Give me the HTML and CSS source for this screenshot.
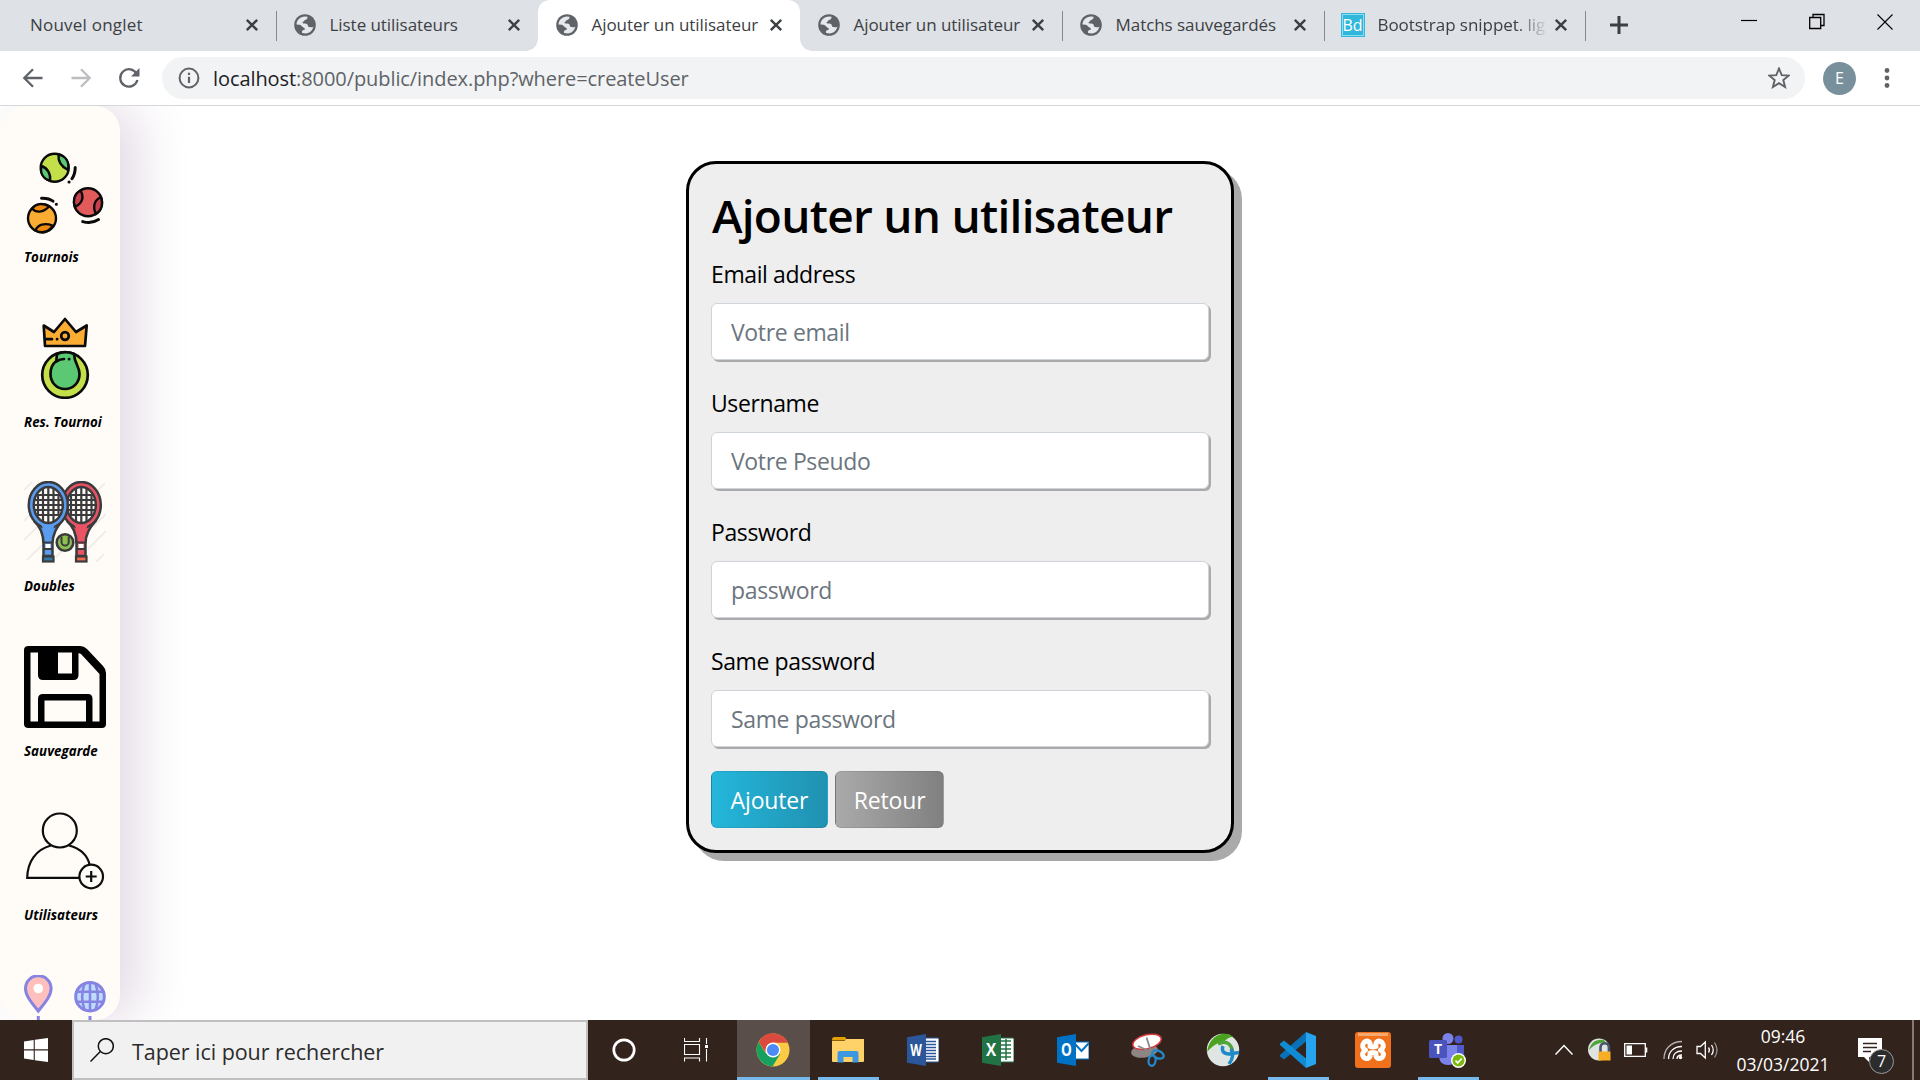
FILE: index.html
```html
<!DOCTYPE html>
<html lang="fr">
<head>
<meta charset="utf-8">
<title>Ajouter un utilisateur</title>
<link rel="stylesheet" href="styles.css">
</head>
<body>
<svg class="defs" width="0" height="0">
  <defs>
    <symbol id="globe" viewBox="0 0 22 22"><circle cx="11" cy="11" r="10.800" fill="#5f6368"/><path d="M2.500 10.500C2.600 6 6 2.700 11 2.500l2.500.3c.3 1.700-.7 2.900-2.300 3.100-1.500.2-1.200 1.900-2.500 2.100-.5 1.200.6 1.700 1.900 1.600 2.200-.2 3.400.8 3.300 2.500.1 1.100 1.600 1 3 1.200 1 .2 1.700 0 2.500-.8-.6 3.700-3.700 6.700-7.600 7l-3.700-.4c-.5-1.900.2-2.900 1.600-3.100 1.700-.3 1.500-2-.3-2.600-1.600-.5-1.900-2.400-3.600-2.700z" fill="#e6e8eb"/></symbol>
    <symbol id="cross" viewBox="0 0 14 14"><path d="M1.800 1.800l10.400 10.400M12.200 1.800L1.800 12.200" stroke="#3c4043" stroke-width="2.400" fill="none"/></symbol>
  </defs>
</svg>
<div class="screen">
  <header class="tabs">
    <div class="tab tab-first"><span class="tab-title">Nouvel onglet</span><svg class="close"><use href="#cross"/></svg></div>
    <div class="tab tab-sep"><svg class="fav"><use href="#globe"/></svg><span class="tab-title">Liste utilisateurs</span><svg class="close"><use href="#cross"/></svg></div>
    <div class="tab tab-active"><svg class="fav"><use href="#globe"/></svg><span class="tab-title">Ajouter un utilisateur</span><svg class="close"><use href="#cross"/></svg></div>
    <div class="tab"><svg class="fav"><use href="#globe"/></svg><span class="tab-title">Ajouter un utilisateur</span><svg class="close"><use href="#cross"/></svg></div>
    <div class="tab tab-sep"><svg class="fav"><use href="#globe"/></svg><span class="tab-title">Matchs sauvegardés</span><svg class="close"><use href="#cross"/></svg></div>
    <div class="tab tab-sep tab-last"><span class="fav-bd">Bd</span><span class="tab-title tab-fade">Bootstrap snippet. lig</span><svg class="close"><use href="#cross"/></svg></div>
    <div class="tab-new"><svg width="18" height="18" viewBox="0 0 18 18"><path d="M9 0v18M0 9h18" stroke="#3c4043" stroke-width="3"/></svg></div>
    <div class="window-buttons">
      <svg width="16" height="18" viewBox="0 0 16 18"><path d="M0 7.500h16" stroke="#000" stroke-width="1.200"/></svg>
      <svg width="16" height="18" viewBox="0 0 16 18"><path d="M.7 4.500h11v11H.7zM4 4.500V1.500h11v11h-3.300" fill="none" stroke="#000" stroke-width="1.300"/></svg>
      <svg width="16" height="18" viewBox="0 0 16 18"><path d="M.5 1.500l15 15M15.500 1.500l-15 15" stroke="#000" stroke-width="1.100"/></svg>
    </div>
  </header>

  <nav class="toolbar">
    <svg class="nav-icon" viewBox="0 0 24 24"><path d="M21.500 12H4M12 3.300L3.300 12l8.700 8.700" fill="none" stroke="#5f6368" stroke-width="2.300"/></svg>
    <svg class="nav-icon" viewBox="0 0 24 24"><path d="M2.500 12H20M12 3.300l8.700 8.700-8.700 8.700" fill="none" stroke="#bbbdc0" stroke-width="2.300"/></svg>
    <svg class="nav-icon" viewBox="0 0 24 24"><path d="M19.600 7.800A8.700 8.700 0 1 0 20.400 14" fill="none" stroke="#5f6368" stroke-width="2.300"/><path d="M22.500 2v8.500H14z" fill="#5f6368"/></svg>
    <div class="omnibox">
      <svg width="22" height="22" viewBox="0 0 22 22"><circle cx="11" cy="11" r="9.400" fill="none" stroke="#5f6368" stroke-width="2"/><path d="M11 9.700V16M11 5.700V8" stroke="#5f6368" stroke-width="2.200"/></svg>
      <span class="url"><span class="url-host">localhost</span>:8000/public/index.php?where=createUser</span>
      <svg width="22" height="22" viewBox="0 0 22 22"><path d="M11 1.500l2.700 6.600 7.100.5-5.500 4.500 1.800 6.900-6.100-3.800L4.900 20l1.800-6.900L1.200 8.600l7.100-.5z" fill="none" stroke="#5f6368" stroke-width="1.900"/></svg>
    </div>
    <span class="avatar">E</span>
    <svg class="dots" width="6" height="22" viewBox="0 0 6 22"><g fill="#5f6368"><circle cx="3" cy="3.500" r="2.400"/><circle cx="3" cy="11" r="2.400"/><circle cx="3" cy="18.500" r="2.400"/></g></svg>
  </nav>

  <main class="page">
    <aside class="sidebar">
      <a class="side-item">
        <svg class="side-icon" viewBox="0 0 82 82">
          <g stroke="#0b0b0b" stroke-width="2.400" stroke-linecap="round">
            <circle cx="30.700" cy="15.700" r="14" fill="#c3e04b"/><path d="M34.500 2.500c-.5 6 2.500 12 9.500 15.500C45.500 9.500 41.500 4 34.500 2.500zM17.500 14c6 2 9.500 8 8.500 14.700-7-2-10-7.700-8.500-14.700z" fill="#5bc873"/>
            <circle cx="64" cy="50.300" r="14" fill="#e35a5a"/><path d="M56.500 38.500c3.500 6 2.500 12.500-5.500 16.500-2.500-7-.5-13.500 5.500-16.500zM77 45c-7 3-8.500 10-5 17 5.500-3 7.500-10 5-17z" fill="#c9414b"/>
            <circle cx="18" cy="66.300" r="14" fill="#fbad33"/><path d="M8 56.500c4 4.500 11 4.500 17-2-6-4-13-3-17 2zM11.500 78.500c2-6 9-8 17-5-3 6.500-10.500 8.500-17 5z" fill="#ef8a0c"/>
            <path d="M51.200 15.500c0 4-1 8-3.200 11.200M45 30h.1M17.500 46.200c5-.2 9 1 11.500 3M32.300 52.300h.1M58.700 69.600c5.500 1.700 11 1.200 15.800-2" fill="none" stroke-width="3"/>
          </g>
        </svg>
        <span>Tournois</span>
      </a>
      <a class="side-item">
        <svg class="side-icon" viewBox="0 0 82 82">
          <g stroke="#0b0b0b" stroke-width="2.700" stroke-linecap="round" stroke-linejoin="round">
            <path d="M19.700 8.500l10.300 6.500L41 2l11 13 10.700-6.500-1.700 20.500H21z" fill="#fbad33"/><circle cx="41" cy="19" r="3.800" fill="#fbad33"/><path d="M22 22.200h6M33 22.200h.2" fill="none"/>
            <circle cx="41" cy="58" r="22.800" fill="#c3e04b"/><path d="M33 37l-.7 7c-4 3-5.800 8-5.800 13 0 8.500 6 15 14.500 15s14.500-6.500 14.500-15c0-8-5-10-5.500-20-4-2.200-12-2.500-17 0z" fill="#5bc873"/><path d="M32.500 44.500c2.500-2 4.500-2.500 7.500-2.500M45 42.200h.2" fill="none"/>
          </g>
        </svg>
        <span>Res. Tournoi</span>
      </a>
      <a class="side-item">
        <svg class="side-icon" viewBox="0 0 82 82">
          <path d="M0 9l8-8M0 40l8-8M0 59l18-18M3 79l19-19M32 76l10-10M52 80l10-10M64 68l18-18M72 81l8-8M73 10l8-8M70 45l12-12" stroke="#ece8e4" stroke-width="1.500"/>
          <g fill="none" stroke="#3b3b3d">
            <path d="M43 40c7 6 9.500 13 9.500 23v12h9V63c0-10 4-16 11-24" fill="#ea5363" stroke-width="2.500"/>
            <ellipse cx="57.300" cy="24" rx="19.500" ry="23" stroke-width="2.500" fill="#ea5363"/>
            <path d="M50.500 44h13l-3 9h-6z" fill="#ea5363" stroke="none"/>
            <ellipse cx="57.300" cy="24" rx="14.500" ry="18" fill="#fffcf8" stroke-width="2.500"/>
            <path d="M47 14v20M52 7v34M57.300 6v36M62.500 7v34M67.500 14v20M45 14h25M43 19h29M43 24h29M43 29h29M45 34h25" stroke-width="2.200"/>
            <path d="M52.500 61.500h9.500M52.500 68h9.500" stroke-width="2.200"/><path d="M54.500 63h5v4h-5z" fill="#fff" stroke="none"/><rect x="52" y="75.500" width="10.500" height="5" fill="#f4694d" stroke-width="2.200"/>
            <path d="M10 40c7 6 9.500 13 9.500 23v12h9V63c0-10 4-16 10-24" fill="#5a9df0" stroke-width="2.500"/>
            <ellipse cx="24.300" cy="24" rx="19.500" ry="23" stroke-width="2.500" fill="#5a9df0"/>
            <path d="M17.500 44h13l-3 9h-6z" fill="#5a9df0" stroke="none"/>
            <ellipse cx="24.300" cy="24" rx="14.500" ry="18" fill="#fffcf8" stroke-width="2.500"/>
            <path d="M14 14v20M19 7v34M24.300 6v36M29.500 7v34M34.500 14v20M12 14h25M10 19h29M10 24h29M10 29h29M12 34h25" stroke-width="2.200"/>
            <path d="M19.500 61.500h9.500M19.500 68h9.500" stroke-width="2.200"/><path d="M21.500 63h5v4h-5z" fill="#fff" stroke="none"/><rect x="19" y="75.500" width="10.500" height="5" fill="#327aa4" stroke-width="2.200"/>
            <circle cx="41" cy="61.500" r="8.300" fill="#8cc152" stroke-width="2.600"/><path d="M37.500 55.500V61a3.600 3.600 0 0 0 7.200 0v-5.500" stroke-width="2"/>
          </g>
        </svg>
        <span>Doubles</span>
      </a>
      <a class="side-item">
        <svg class="side-icon" viewBox="0 0 82 82">
          <path d="M4.500 0H56q4 0 7 3l16 17q3 3 3 7v51q0 4-4 4H4.500Q0 82 0 78V4Q0 0 4.500 0zM6.500 6.500v69H14V53q0-5 5-5h45q4.500 0 4.500 5v22.500h7V28L57 8l-2.500-1V29q0 5-5 5H19q-5 0-5-5V6.500zM34 6.500v21h14v-21zM20.500 54.500v21H62v-21z" fill="#000" fill-rule="evenodd"/>
        </svg>
        <span>Sauvegarde</span>
      </a>
      <a class="side-item">
        <svg class="side-icon" viewBox="0 0 82 82">
          <g fill="none" stroke="#0d0d0d" stroke-width="2.200"><circle cx="35.800" cy="20.500" r="17"/><path d="M27 35.500C12 39.500 3.500 51.500 3.200 67.800h52M45 35.500c11.500 3 18.500 10 20.700 19.500"/><circle cx="67.200" cy="66.500" r="11.800"/><path d="M67.200 61v11M61.700 66.500h11"/></g>
        </svg>
        <span>Utilisateurs</span>
      </a>
      <a class="side-item">
        <svg class="side-icon" viewBox="0 0 82 82">
          <g stroke="#8683e3" stroke-width="3">
            <path d="M14.300 36C8 28 1.500 21 1.500 13.500a12.800 12.800 0 0 1 25.600 0C27.100 21 20.600 28 14.300 36z" fill="#ffbfbd"/><circle cx="14.300" cy="13.500" r="4.800" fill="#fff" stroke="none"/>
            <circle cx="66" cy="21.700" r="14.300" fill="#bddcfb"/><path d="M66 7v29M52.500 16.700h27M52.500 26.700h27M60.500 8.500c-2.800 8-2.800 18.500 0 26.500M71.500 8.500c2.800 8 2.800 18.500 0 26.500" fill="none" stroke-width="2.500"/>
            <path d="M14.300 41v12M66 41v12"/>
          </g>
        </svg>
      </a>
    </aside>
    <form class="card">
      <h1>Ajouter un utilisateur</h1>
      <div class="field"><label>Email address</label><input type="text" placeholder="Votre email"></div>
      <div class="field"><label>Username</label><input type="text" placeholder="Votre Pseudo"></div>
      <div class="field"><label>Password</label><input type="text" placeholder="password"></div>
      <div class="field"><label>Same password</label><input type="text" placeholder="Same password"></div>
      <div class="actions"><button type="button" class="btn btn-add">Ajouter</button><button type="button" class="btn btn-back">Retour</button></div>
    </form>
  </main>

  <footer class="taskbar">
    <div class="start"><svg width="24" height="24" viewBox="0 0 24 24"><path d="M0 3.400L9.700 2v9.300H0zM10.800 1.800L24 0v11.300H10.800zM0 12.500h9.700V22L0 20.600zM10.800 12.500H24V24l-13.200-1.800z" fill="#fff"/></svg></div>
    <div class="search"><svg width="24" height="24" viewBox="0 0 24 24"><circle cx="15.800" cy="8.200" r="7.500" fill="none" stroke="#111" stroke-width="1.500"/><path d="M10.300 13.500L.5 23.500" stroke="#111" stroke-width="1.500"/></svg><span>Taper ici pour rechercher</span></div>
    <div class="apps">
      <div class="app"><svg width="24" height="24" viewBox="0 0 24 24"><circle cx="12" cy="12" r="10.200" fill="none" stroke="#fff" stroke-width="2.700"/></svg></div>
      <div class="app"><svg width="24" height="24" viewBox="0 0 24 24"><path d="M.5 0v3.500h15V0M.5 6.500h15v10H.5zM.5 23.500V20h15v3.500M22.500 0v6M22.500 11v12.500" fill="none" stroke="#fff" stroke-width="1.100"/><path d="M21 7h3v3h-3z" fill="#fff"/></svg></div>
      <div class="app app-open app-current"><svg width="34" height="34" viewBox="0 0 34 34"><circle cx="17" cy="17" r="16.500" fill="#fbcb43"/><path d="M2.700 8.800A16.500 16.500 0 0 0 16.500 33.500L24.300 20.700 9.500 20z" fill="#17a160"/><path d="M2.700 8.800a16.500 16.500 0 0 1 29.300 1H17a7.300 7.300 0 0 0-7 5.800l-.3 4z" fill="#db4a3f"/><circle cx="17" cy="17" r="7.500" fill="#fff"/><circle cx="17" cy="17" r="6.100" fill="#4c8bf5"/></svg></div>
      <div class="app app-open"><svg width="32" height="28" viewBox="0 0 32 28"><path d="M0 3.500q0-2.500 2-2.500h11l2.500 3.500H0z" fill="#e2a003"/><path d="M0 5h12.500l2-2H32v22q0 1-1 1H1q-1 0-1-1z" fill="#fed268"/><path d="M5.500 26.500V17q0-2 2-2h17q2 0 2 2v9.500h-6V21h-9v5.500z" fill="#3d98e0"/></svg></div>
      <div class="app"><svg width="32" height="32" viewBox="0 0 32 32"><path d="M18 4h13q1 0 1 1v22q0 1-1 1H18z" fill="#fff" stroke="#2b579a"/><path d="M19 7.500h10M19 10.500h10M19 13.500h10M19 16.500h10M19 19.500h10M19 22.500h10M19 25h10" stroke="#2b579a" stroke-width="1.300"/><path d="M0 3.300L19 0v32L0 28.700z" fill="#2b579a"/><text class="glyph" transform="translate(9 22) scale(.75 1)" font-size="16">W</text></svg></div>
      <div class="app"><svg width="32" height="32" viewBox="0 0 32 32"><path d="M18 4h13q1 0 1 1v22q0 1-1 1H18z" fill="#fff" stroke="#217346"/><path d="M19 7h10M19 11h10M19 15h10M19 19h10M19 23h10M24 5v21" stroke="#217346" stroke-width="1.500"/><path d="M0 3.300L19 0v32L0 28.700z" fill="#217346"/><text class="glyph" transform="translate(9 22) scale(.85 1)" font-size="18">X</text></svg></div>
      <div class="app"><svg width="32" height="32" viewBox="0 0 32 32"><path d="M18 8h14v17H18z" fill="#fff" stroke="#0072c6"/><path d="M18 10l6.500 7L32 9" fill="none" stroke="#0072c6" stroke-width="2"/><path d="M0 3.300L19 0v32L0 28.700z" fill="#0072c6"/><text class="glyph" transform="translate(9.3 22) scale(.8 1)" font-size="17">O</text></svg></div>
      <div class="app"><svg width="34" height="34" viewBox="0 0 34 34"><ellipse cx="13.500" cy="18" rx="13.500" ry="6.500" fill="#8c8583" transform="rotate(-8 14 18)"/><ellipse cx="16" cy="8.800" rx="14.500" ry="7" fill="#fff" stroke="#d83a3e" stroke-width="1.500" transform="rotate(-14 16 8.800)"/><path d="M15.500 4.500l5.500 17M7 13l15 7" stroke="#888" stroke-width="1.800"/><g fill="none" stroke="#2388c9" stroke-width="2.300"><ellipse cx="27" cy="21.500" rx="6" ry="3.700" transform="rotate(25 27 21.500)"/><ellipse cx="21" cy="27.500" rx="3.500" ry="5.300" transform="rotate(10 21 28)"/></g></svg></div>
      <div class="app"><svg width="34" height="34" viewBox="0 0 34 34"><circle cx="17" cy="17" r="16.200" fill="#dfe5e3"/><path d="M1.200 19C2 10 8 2 16 1h7l4 3c-4 0-7 2-9 5-6 0-12 4-16.800 10z" fill="#4aa21f"/><path d="M12 11c7-4 13-1 14.500 7" fill="none" stroke="#4fa638" stroke-width="3.500"/><path d="M17 13c-2 5 1 8 6 8l10-1.500M25 16c3 5 1 11-2 15" fill="none" stroke="#1e8bc8" stroke-width="3.500"/></svg></div>
      <div class="app app-open"><svg width="36" height="36" viewBox="0 0 36 36"><path d="M26 9.500L4 27.500 0 24.500v-1.500L26 0z" fill="#0872b8"/><path d="M26 26.500L4 8.500 0 11.500V13l26 23z" fill="#0f8bd4"/><path d="M26 0l10 4v28l-10 4z" fill="#27a4ee"/></svg></div>
      <div class="app"><svg width="36" height="36" viewBox="0 0 36 36"><rect width="36" height="36" rx="3" fill="#f0701c"/><path d="M3 1h30v3H3z" fill="#f6a871"/><path d="M9 10.500c3.500-3 7-.5 6 4q3 1.200 6 0c-1-4.500 2.500-7 6-4 2.500 3 1.500 5.500-1.500 7.500 3 2 4 5 1.500 7.500-3.500 2.500-7 0-6-4.500q-3-1.200-6 0c1 4.500-2.500 7-6 4.500-2.500-2.500-1.500-5.500 1.500-7.500-3-2-4-4.500-1.500-7.500z" fill="none" stroke="#fff" stroke-width="5" stroke-linejoin="round"/></svg></div>
      <div class="app app-open"><svg width="38" height="36" viewBox="0 0 38 36"><circle cx="29.500" cy="7.500" r="4" fill="#5059c9"/><path d="M22 13h13v11q0 6-7 6h-6z" fill="#5059c9"/><circle cx="19" cy="6.500" r="5.500" fill="#7b83eb"/><path d="M10 13h18v12q0 8-9 8-8 0-9-8z" fill="#7b83eb"/><rect y="8" width="18" height="18" rx="1.500" fill="#4b53bc"/><text class="glyph" x="9" y="22" font-size="14">T</text><circle cx="29.500" cy="28.500" r="7.500" fill="#fff"/><circle cx="29.500" cy="28.500" r="6" fill="#7cb80b"/><path d="M26.500 28.500l2.200 2.500 4-4.500" fill="none" stroke="#fff" stroke-width="1.700"/></svg></div>
    </div>
    <div class="tray">
      <svg width="18" height="12" viewBox="0 0 18 12"><path d="M.5 10.500l8.500-9 8.500 9" fill="none" stroke="#fff" stroke-width="1.500"/></svg>
      <svg class="tray-vpn" width="24" height="24" viewBox="0 0 24 24"><circle cx="11" cy="11.500" r="11" fill="#dfe3e1"/><path d="M1 12C3 5 7 1 16 2l2 3c-7-1-12 2-17 7z" fill="#4fa53c"/><path d="M12.500 14V9.500a4.200 4.200 0 0 1 8.400 0V14" fill="#dfe3e1" stroke="#44546a" stroke-width="2.600"/><path d="M10.500 13.500h12v9h-12z" fill="#f8ae24"/></svg>
      <svg class="tray-battery" width="24" height="14" viewBox="0 0 24 14"><path d="M.7.700h20.600v12.600H.7z" fill="none" stroke="#fff" stroke-width="1.300"/><path d="M2.500 2.500h5.500v9H2.500zM22 4.500h1.300v5H22z" fill="#fff"/></svg>
      <svg class="tray-wifi" width="20" height="20" viewBox="0 0 20 20"><g fill="none" stroke="#fff" stroke-width="1.300"><path d="M1 19C1 9 8 1.500 19 1.500" opacity=".65"/><path d="M5.500 19c0-7 5-12.500 13.500-12.500M10 19c0-4.500 3-8 9-8M14 19c0-2 1.500-4 5-4"/></g><circle cx="17.500" cy="17.500" r="1.700" fill="#fff"/></svg>
      <svg class="tray-sound" width="23" height="20" viewBox="0 0 23 20"><g fill="none" stroke="#fff" stroke-width="1.300"><path d="M1 6.500h3.500L9.300 2v16l-4.800-4.500H1zM12.500 7.500q1.800 2.500 0 5M15.500 5q3.500 5 0 10"/><path d="M18.500 2.500q5 7.500 0 15" opacity=".5"/></g></svg>
      <div class="clock"><span>09:46</span><span>03/03/2021</span></div>
      <div class="notif"><svg width="24" height="24" viewBox="0 0 24 24"><path d="M0 0h24v19H11v5l-5-5H0z" fill="#fff"/><path d="M5 5.500h14M5 9.500h14M5 13.500h8" stroke="#32231d" stroke-width="1.300"/></svg><span class="notif-count">7</span></div>
      <div class="show-desktop"></div>
    </div>
  </footer>
</div>
</body>
</html>
```
FILE: styles.css
```css
* { box-sizing: border-box; }
body { margin: 0; font-family: "Open Sans", sans-serif; color: #000; overflow: hidden; }
svg { display: block; flex: none; }
.defs { position: absolute; }
.screen { display: flex; flex-direction: column; width: 1920px; height: 1080px; background: #fff; overflow: hidden; }

/* tab strip */
.tabs { display: flex; height: 51px; background: #dee1e6; }
.tab { display: flex; align-items: center; width: 262px; padding: 0 17px 1px 18px; position: relative; flex: none; }
.tab-first { width: 275.500px; padding-left: 30px; }
.tab-title { flex: 1; margin-left: 14px; font-size: 17px; letter-spacing: -0.05px; line-height: 24px; color: #3c4043; white-space: nowrap; }
.tab-first .tab-title { margin-left: 0; letter-spacing: 0.22px; }
.tab-last { width: 261px; padding-left: 17px; }
.tab-fade { -webkit-mask-image: linear-gradient(90deg, #000 138px, transparent 170px); mask-image: linear-gradient(90deg, #000 138px, transparent 170px); }
.tab-sep::before, .tab-new::before { content: ""; position: absolute; left: 0; top: 11px; width: 1.500px; height: 30px; background: #85888d; }
.tab-active { background: #fff; border-radius: 12px 12px 0 0; }
.tab-active::before, .tab-active::after { content: ""; position: absolute; bottom: 0; width: 12px; height: 12px; }
.tab-active::before { left: -12px; background: radial-gradient(circle at 0 0, transparent 11.500px, #fff 12px); }
.tab-active::after { right: -12px; background: radial-gradient(circle at 100% 0, transparent 11.500px, #fff 12px); }
.fav { width: 22px; height: 22px; }
.fav-bd { flex: none; width: 24px; height: 24px; margin-right: -1px; border: 1px solid #31b7dc; outline: 1px solid #8bdcf0; outline-offset: -2px; background: #31b7dc; color: #fff; font-size: 16px; line-height: 22px; text-align: center; }
.close { width: 14px; height: 14px; }
.tab-new { position: relative; display: flex; align-items: center; width: 68px; padding: 0 0 1px 25px; }
.window-buttons { display: flex; gap: 52px; margin-left: auto; padding: 13px 27px 0 0; }

/* toolbar */
.toolbar { display: flex; align-items: center; height: 55px; padding: 0 30px 0 21px; border-bottom: 1px solid #d6d7da; }
.nav-icon { width: 24px; height: 24px; margin-right: 24px; }
.nav-icon:nth-child(3) { margin-right: 21px; }
.omnibox { display: flex; align-items: center; width: 1643px; height: 42px; padding: 0 15px 0 16px; border-radius: 21px; background: #f1f3f4; }
.url { flex: 1; margin-left: 13px; font-size: 20px; letter-spacing: -0.08px; color: #5f6368; }
.url-host { color: #202124; }
.avatar { width: 33px; height: 33px; margin: 0 auto 0 18px; border-radius: 50%; background: #78909c; color: #fff; font-size: 16px; line-height: 33px; text-align: center; }

/* page */
.page { display: flex; height: 914px; overflow: hidden; }
.sidebar { display: flex; flex-direction: column; width: 120px; height: 914px; padding: 46px 14px 0 24px; border-radius: 25px; background: #fffcf8; box-shadow: 20px 0 50px #e4dbe6; overflow: hidden; flex: none; }
.side-item { display: block; height: 164.500px; flex: none; font-size: 13.300px; font-weight: 700; font-style: italic; letter-spacing: 0.05px; line-height: 18px; white-space: nowrap; }
.side-icon { width: 82px; height: 82px; margin-bottom: 14px; }
.card { width: 548px; height: 692px; margin: 55px 0 0 566px; padding: 20px 22px 24px; border: 3px solid #000; border-radius: 30px; background: #eee; box-shadow: 8px 8px 0 #aaa; }
.card h1 { margin: 0; height: 66px; padding-left: 1px; font-size: 46px; font-weight: 560; letter-spacing: -0.72px; line-height: 62px; white-space: nowrap; }
.field { height: 129px; }
.field label { display: block; height: 53px; font-size: 23px; letter-spacing: -0.4px; line-height: 48px; }
.field input { display: block; width: 498px; height: 57px; padding: 0 19px; border: 1px solid #ced4da; border-radius: 6px; background: #fff; box-shadow: 2px 2px 0 #aaa; font: 23px "Open Sans", sans-serif; letter-spacing: -0.36px; }
.field input::placeholder { color: #6c757d; }
.actions { display: flex; gap: 7px; margin-top: 5px; }
.btn { height: 57px; padding: 0; border: 1px solid rgba(0, 0, 0, 0.08); border-radius: 6px; color: #fff; font: 23px "Open Sans", sans-serif; letter-spacing: -0.15px; }
.btn-add { width: 117px; background: linear-gradient(90deg, #23b7db, #2191b1); }
.btn-back { width: 109px; background: linear-gradient(90deg, #aaa, #808080); }

/* taskbar */
.taskbar { display: flex; height: 60px; background: #32231d; color: #fff; }
.start { display: flex; align-items: center; justify-content: center; width: 72px; }
.search { display: flex; align-items: center; width: 516px; padding-left: 16px; border: 2px solid #c0c0c0; background: #f1f1f1; color: #2b2b2b; font-size: 21.500px; letter-spacing: -0.05px; }
.search span { margin: 2px 0 0 18px; }
.apps { display: flex; margin-left: -1px; }
.app { position: relative; display: flex; align-items: center; justify-content: center; width: 75px; }
.app:nth-child(-n+2) { width: 74px; }
.app:nth-child(2) { padding-right: 5px; }
.app-open::after { content: ""; position: absolute; left: 8px; bottom: 0; width: 61px; height: 3px; background: #76b9ed; }
.app-current { background: linear-gradient(90deg, transparent 2px, #5a4e4a 2px); }
.app-current::after { left: 2px; width: 73px; }
.glyph { fill: #fff; font-weight: 700; text-anchor: middle; }
.tray { display: flex; align-items: center; margin-left: auto; }
.tray-vpn { margin-left: 15px; }
.tray-battery { margin-left: 12px; }
.tray-wifi { margin-left: 15px; }
.tray-sound { margin-left: 13px; }
.clock { display: flex; flex-direction: column; width: 94px; margin-left: 17px; text-align: center; font-size: 17.500px; line-height: 28px; }
.notif { position: relative; width: 24px; height: 24px; margin: 0 30px 0 28px; }
.notif-count { position: absolute; left: 11px; top: 11px; width: 25px; height: 25px; border: 1px solid #999; border-radius: 50%; background: #2c2c2c; font-size: 16px; line-height: 23px; text-align: center; }
.show-desktop { width: 8px; height: 60px; border-left: 2px solid #85797a; }
```
